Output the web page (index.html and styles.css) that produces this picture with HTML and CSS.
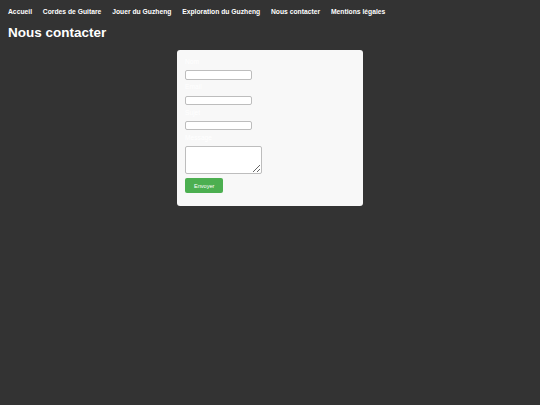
FILE: index.html
```html
<!DOCTYPE html>
<html lang="fr">
<head>
<meta charset="utf-8">
<title>Nous contacter</title>
<link rel="stylesheet" href="styles.css">
</head>
<body>
<nav class="nav">
  <a href="#">Accueil</a>
  <a href="#">Cordes de Guitare</a>
  <a href="#">Jouer du Guzheng</a>
  <a href="#">Exploration du Guzheng</a>
  <a href="#">Nous contacter</a>
  <a href="#">Mentions légales</a>
</nav>
<main class="main">
  <h1 class="title">Nous contacter</h1>
  <form class="contact">
    <label class="field-label" for="nom">Nom</label>
    <input class="field" id="nom" type="text">
    <label class="field-label" for="email">Email</label>
    <input class="field" id="email" type="email">
    <label class="field-label" for="sujet">Sujet</label>
    <input class="field" id="sujet" type="text">
    <label class="field-label" for="message">Message</label>
    <textarea class="area" id="message"></textarea>
    <button class="send" type="submit">Envoyer</button>
  </form>
</main>
</body>
</html>
```

FILE: styles.css
```css
html, body {
  margin: 0;
  padding: 0;
}

body {
  background: #333333;
  color: #ffffff;
  font-family: "Liberation Sans", Arial, sans-serif;
}

.nav {
  display: flex;
  gap: 10.8px;
  padding: 8px;
  font-size: 6.75px;
  line-height: 7.6px;
}

.nav a {
  color: #ffffff;
  font-weight: bold;
  text-decoration: none;
}

.main {
  padding: 0 8px;
}

.title {
  margin: 1px 0 10px;
  font-size: 13.5px;
  line-height: 15.4px;
  font-weight: bold;
}

.contact {
  width: 170px;
  margin: 0 auto;
  padding: 8px;
  background: #f8f8f8;
  border-radius: 3px;
  display: flex;
  flex-direction: column;
  align-items: flex-start;
}

.field-label {
  display: block;
  font-size: 6.67px;
  line-height: 7.7px;
  color: #ffffff;
  margin-bottom: 4.6px;
}

.field {
  box-sizing: border-box;
  width: 67px;
  height: 9.4px;
  margin: 0 0 3.6px;
  padding: 0;
  border: 1px solid #bdbdbd;
  border-radius: 2px;
  background: #ffffff;
  font-size: 6px;
}

.area {
  box-sizing: border-box;
  width: 77px;
  height: 27.7px;
  margin: 0 0 4.6px;
  padding: 0;
  border: 1px solid #bdbdbd;
  border-radius: 2px;
  background: #ffffff;
  font-size: 6px;
}

.send {
  box-sizing: border-box;
  width: 38.4px;
  height: 14.7px;
  margin: 0 0 4.5px;
  padding: 0;
  border: none;
  border-radius: 2px;
  background: #4caf50;
  color: #ffffff;
  font-family: "Liberation Sans", Arial, sans-serif;
  font-size: 5.6px;
}
```
